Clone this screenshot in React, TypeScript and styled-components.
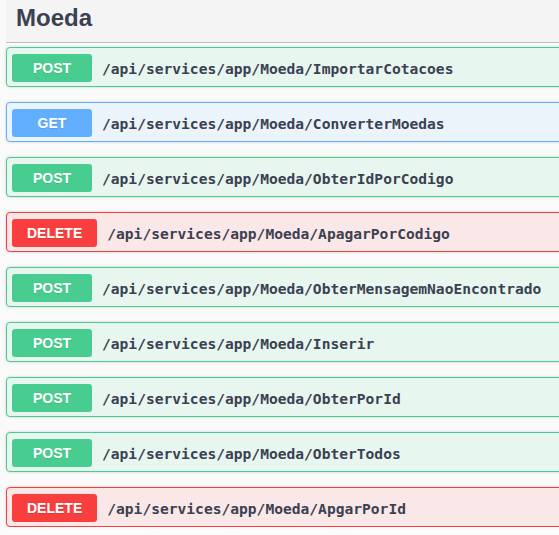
import React from "react";
import styled, { createGlobalStyle } from "styled-components";

const GlobalStyle = createGlobalStyle`
  html, body {
    margin: 0;
    padding: 0;
    background: #fafafa;
    overflow: hidden;
  }
  body {
    font-family: "Liberation Sans", Arial, sans-serif;
  }
`;

type Method = "POST" | "GET" | "DELETE";

const palette: Record<Method, { border: string; bg: string; badge: string }> = {
  POST: { border: "#49cc90", bg: "#e8f6f0", badge: "#49cc90" },
  GET: { border: "#61affe", bg: "#ebf3fb", badge: "#61affe" },
  DELETE: { border: "#f93e3e", bg: "#fae7e7", badge: "#f93e3e" },
};

const Page = styled.div`
  width: 620px;
  padding-left: 6px;
`;

const TagHeader = styled.div`
  background: #f4f4f4;
  border-bottom: 1px solid #bcbdc1;
  padding: 0 10px 6px 10px;
  box-sizing: border-box;
  height: 43px;
  margin-bottom: 4px;
`;

const Title = styled.h3`
  margin: 0;
  font-family: "Liberation Sans", Arial, sans-serif;
  font-weight: 700;
  font-size: 24px;
  line-height: 36px;
  color: #3b4151;
`;

const List = styled.div`
  display: flex;
  flex-direction: column;
  gap: 15px;
`;

const Block = styled.div<{ $m: Method }>`
  display: flex;
  align-items: center;
  height: 40px;
  box-sizing: border-box;
  padding: 0 5px;
  border: 1px solid ${(p) => palette[p.$m].border};
  background: ${(p) => palette[p.$m].bg};
  border-radius: 4px;
  box-shadow: 0 0 3px rgba(0, 0, 0, 0.19);
`;

const Badge = styled.span<{ $m: Method }>`
  min-width: 80px;
  box-sizing: border-box;
  padding: 6px 15px;
  text-align: center;
  border-radius: 3px;
  background: ${(p) => palette[p.$m].badge};
  color: #fff;
  font-family: "Liberation Sans", Arial, sans-serif;
  font-weight: 700;
  font-size: 14px;
  line-height: 16px;
  text-shadow: 0 1px 0 rgba(0, 0, 0, 0.1);
  margin-top: 1px;
`;

const Path = styled.span`
  padding: 2px 10px 0 10px;
  font-family: "DejaVu Sans Mono", "Liberation Mono", monospace;
  font-weight: 700;
  font-size: 14.6px;
  color: #3b4151;
  white-space: nowrap;
`;

const ops: { m: Method; p: string }[] = [
  { m: "POST", p: "/api/services/app/Moeda/ImportarCotacoes" },
  { m: "GET", p: "/api/services/app/Moeda/ConverterMoedas" },
  { m: "POST", p: "/api/services/app/Moeda/ObterIdPorCodigo" },
  { m: "DELETE", p: "/api/services/app/Moeda/ApagarPorCodigo" },
  { m: "POST", p: "/api/services/app/Moeda/ObterMensagemNaoEncontrado" },
  { m: "POST", p: "/api/services/app/Moeda/Inserir" },
  { m: "POST", p: "/api/services/app/Moeda/ObterPorId" },
  { m: "POST", p: "/api/services/app/Moeda/ObterTodos" },
  { m: "DELETE", p: "/api/services/app/Moeda/ApgarPorId" },
];

export default function App() {
  return (
    <>
      <GlobalStyle />
      <Page>
        <TagHeader>
          <Title>Moeda</Title>
        </TagHeader>
        <List>
          {ops.map((o, i) => (
            <Block key={i} $m={o.m}>
              <Badge $m={o.m}>{o.m}</Badge>
              <Path>{o.p}</Path>
            </Block>
          ))}
        </List>
      </Page>
    </>
  );
}
